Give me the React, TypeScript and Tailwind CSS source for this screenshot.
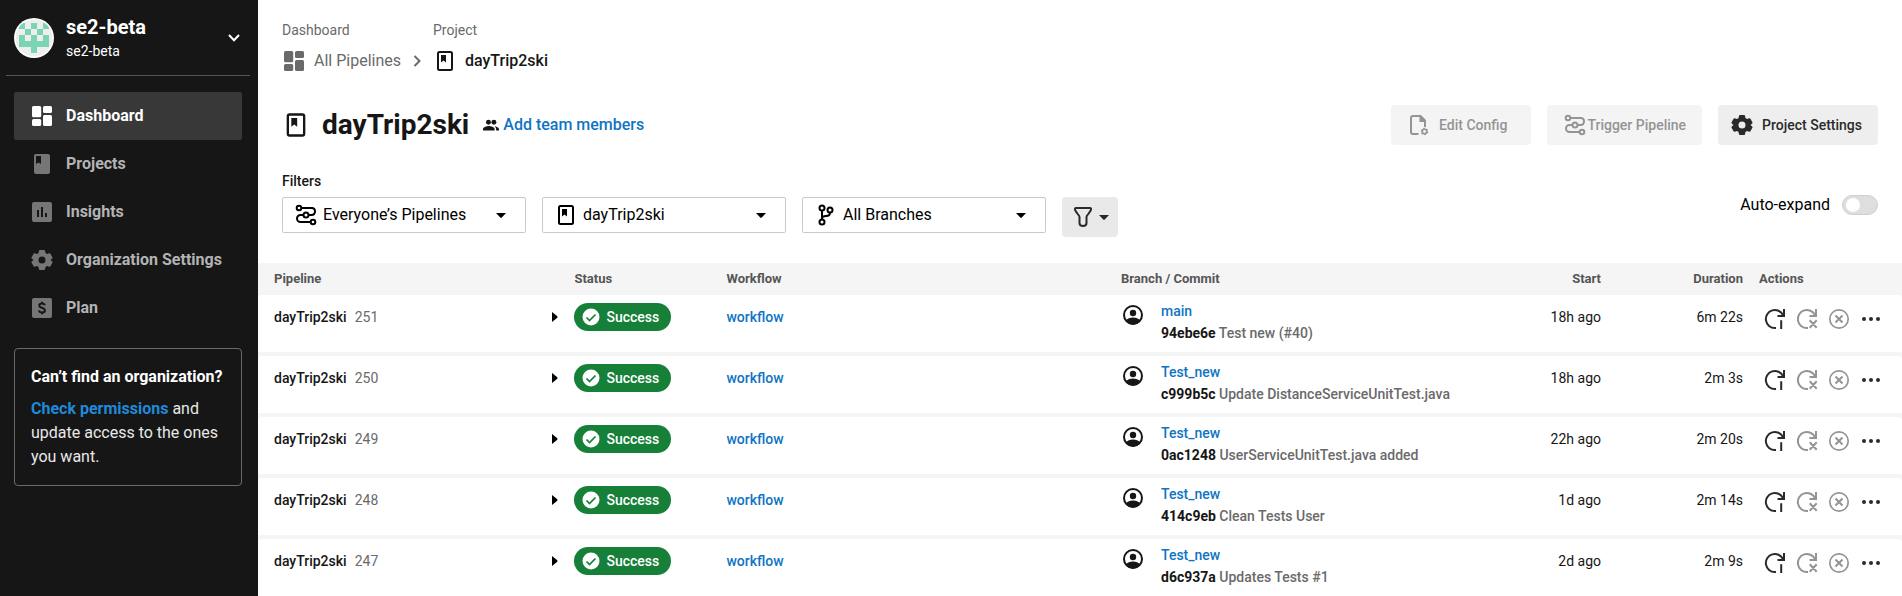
import React, { useState } from "react";

type IconProps = { className?: string };

function Svg({ className = "size-6", children }: { className?: string; children: React.ReactNode }) {
  return (
    <svg viewBox="0 0 24 24" className={`${className} shrink-0`} fill="none" aria-hidden="true">
      {children}
    </svg>
  );
}

function DashboardIcon({ className }: IconProps) {
  return (
    <Svg className={className}>
      <g fill="currentColor">
        <rect x="2" y="2" width="9.2" height="11.2" rx="1.5" />
        <rect x="2" y="15" width="9.2" height="7" rx="1.5" />
        <rect x="13" y="2" width="9" height="7" rx="1.5" />
        <rect x="13" y="11" width="9" height="11" rx="1.5" />
      </g>
    </Svg>
  );
}

function BookSolidIcon({ className }: IconProps) {
  return (
    <Svg className={className}>
      <path
        fill="currentColor"
        fillRule="evenodd"
        d="M6 2h12a2 2 0 0 1 2 2v16a2 2 0 0 1-2 2H6a2 2 0 0 1-2-2V4a2 2 0 0 1 2-2Zm0 2v8l2.5-1.6L11 12V4H6Z"
      />
    </Svg>
  );
}

function BookIcon({ className }: IconProps) {
  return (
    <Svg className={className}>
      <rect x="5" y="3" width="14" height="18" rx="1.5" stroke="currentColor" strokeWidth="2" />
      <path fill="currentColor" d="M8 6h5v7.5l-2.5-2-2.5 2V6Z" />
    </Svg>
  );
}

function InsightsIcon({ className }: IconProps) {
  return (
    <Svg className={className}>
      <path
        fill="currentColor"
        fillRule="evenodd"
        d="M4 2h16a2 2 0 0 1 2 2v16a2 2 0 0 1-2 2H4a2 2 0 0 1-2-2V4a2 2 0 0 1 2-2Zm3 8v7h2v-7H7Zm4-3v10h2V7h-2Zm4 6v4h2v-4h-2Z"
      />
    </Svg>
  );
}

function GearIcon({ className }: IconProps) {
  return (
    <Svg className={className}>
      <path
        fill="currentColor"
        fillRule="evenodd"
        d="M9.900 2h4.200c.5 0 .9.400 1 .9l.3 2.200 1.700 1 2.100-.8c.5-.200 1 0 1.200.4l2 3.500c.3.400.2 1-.2 1.300l-1.700 1.400v.200l1.700 1.400c.4.300.5.900.2 1.300l-2 3.500c-.2.400-.7.600-1.200.400l-2.100-.8-1.700 1-.3 2.200c-.1.500-.5.900-1 .9H9.900c-.5 0-.9-.4-1-.9l-.3-2.200-1.700-1-2.100.8c-.5.200-1 0-1.200-.4l-2-3.500c-.3-.400-.2-1 .2-1.300l1.700-1.400v-.200l-1.700-1.400c-.4-.300-.5-.900-.2-1.300l2-3.500c.2-.400.7-.600 1.200-.4l2.100.8 1.700-1 .3-2.200c.1-.5.5-.9 1-.9ZM12 8.500a3.500 3.500 0 1 0 0 7 3.500 3.500 0 0 0 0-7Z"
      />
    </Svg>
  );
}

function PlanIcon({ className }: IconProps) {
  return (
    <Svg className={className}>
      <rect x="2" y="2" width="20" height="20" rx="2" fill="currentColor" />
      <path
        d="M14.800 9.300c-.2-1.100-1.200-1.800-2.800-1.800s-2.700.8-2.700 2c0 3 5.600 1.600 5.600 4.900 0 1.300-1.200 2.100-2.900 2.100s-2.800-.8-3-2.100M12 5.800v2M12 16.200v2"
        stroke="#161616"
        strokeWidth="2"
      />
    </Svg>
  );
}

function PipelineIcon({ className }: IconProps) {
  return (
    <Svg className={className}>
      <g stroke="currentColor" strokeWidth="2" fill="none">
        <circle cx="5" cy="5" r="2.300" />
        <circle cx="12" cy="12" r="2.500" />
        <circle cx="19" cy="19" r="2.300" />
        <path d="M7.500 5H18a3 3 0 0 1 3 3.300C21 10.500 19.800 12 17.500 12h-3M9.500 12H6.500a3.500 3.500 0 0 0 0 7h10" />
      </g>
    </Svg>
  );
}

function BranchIcon({ className }: IconProps) {
  return (
    <Svg className={className}>
      <g stroke="currentColor" strokeWidth="2">
        <circle cx="8" cy="5" r="2.500" />
        <circle cx="16" cy="7" r="2.500" />
        <circle cx="8" cy="19" r="2.500" />
        <path d="M8 7.500v9M16 9.500c0 3-1.500 3.500-4 3.500-2.500 0-4 .5-4 2.500" />
      </g>
    </Svg>
  );
}

function FileGearIcon({ className }: IconProps) {
  return (
    <Svg className={className}>
      <path d="M11.500 21H6a2 2 0 0 1-2-2V5a2 2 0 0 1 2-2h7.500L18 7.500V14" stroke="currentColor" strokeWidth="2" />
      <path d="M12.500 2.500V9H19L12.500 2.500Z" fill="currentColor" />
      <circle cx="17.500" cy="18.500" r="2.200" stroke="currentColor" strokeWidth="1.500" />
      <circle cx="17.500" cy="18.500" r="3.200" stroke="currentColor" strokeWidth="1.200" strokeDasharray="1.680 1.670" />
    </Svg>
  );
}

function PeopleIcon({ className }: IconProps) {
  return (
    <svg viewBox="1 4 22 15" className={`${className} shrink-0`} fill="currentColor" aria-hidden="true">
      <path d="M16.670 13.130C18.040 14.060 19 15.320 19 17v2h4v-2c0-2.180-3.570-3.470-6.330-3.870z" />
      <circle cx="8.500" cy="7.800" r="3.400" />
      <circle cx="16" cy="7.800" r="3.400" />
      <path d="M9 13c-2.670 0-8 1.340-8 4v2h16v-2c0-2.660-5.330-4-8-4z" />
    </svg>
  );
}

function FunnelIcon({ className }: IconProps) {
  return (
    <Svg className={className}>
      <path
        d="M5 3h14c1 0 1.300 1 1 1.700-.5 1.400-1.500 3-2.800 4.400-1 1-1.700 1.800-1.700 3V18c0 1.800-1.500 3-3.500 3S8.500 19.800 8.500 18v-5.900c0-1.200-.7-2-1.700-3C5.500 7.700 4.500 6.100 4 4.700 3.700 4 4 3 5 3Z"
        stroke="currentColor"
        strokeWidth="2"
      />
    </Svg>
  );
}

function CaretIcon({ className }: IconProps) {
  return (
    <svg viewBox="0 0 10 5" className={`${className} h-[5px] w-2.5 shrink-0`} fill="currentColor" aria-hidden="true">
      <path d="M0 0h10L6 4.300c-.6.700-1.400.700-2 0L0 0Z" />
    </svg>
  );
}

function UserIcon({ className }: IconProps) {
  return (
    <Svg className={className}>
      <circle cx="12" cy="12" r="9" stroke="currentColor" strokeWidth="2" />
      <circle cx="12" cy="10" r="3.200" fill="currentColor" />
      <path d="M4.500 17.500C6.500 15.500 9 14.500 12 14.500s5.500 1 7.500 3A9.200 9.200 0 0 1 12 21.500a9.200 9.200 0 0 1-7.500-4Z" fill="currentColor" />
    </Svg>
  );
}

function RerunIcon({ className }: IconProps) {
  return (
    <Svg className={className}>
      <path d="M13 21h-1a9 9 0 1 1 8-12.800M21 2v7h-6.500M18.200 13.200V22" stroke="currentColor" strokeWidth="2" />
    </Svg>
  );
}

function RerunFailedIcon({ className }: IconProps) {
  return (
    <Svg className={className}>
      <path d="M13 21h-1a9 9 0 1 1 8-12.800M21 2v7h-6.500M14.700 13.200l7 7.600M21.700 13.200l-7 7.600" stroke="currentColor" strokeWidth="2" />
    </Svg>
  );
}

function CancelIcon({ className }: IconProps) {
  return (
    <Svg className={className}>
      <circle cx="12" cy="12" r="9.200" stroke="currentColor" strokeWidth="1.700" />
      <path d="M8.500 8.500l7 7M15.500 8.500l-7 7" stroke="currentColor" strokeWidth="2" />
    </Svg>
  );
}

function MoreIcon({ className }: IconProps) {
  return (
    <Svg className={className}>
      <g fill="currentColor">
        <circle cx="5" cy="12" r="2" />
        <circle cx="12" cy="12" r="2" />
        <circle cx="19" cy="12" r="2" />
      </g>
    </Svg>
  );
}

function OrgAvatar() {
  return (
    <svg viewBox="0 0 40 40" className="size-10 shrink-0" role="img" aria-label="se2-beta">
      <defs>
        <clipPath id="org-avatar">
          <circle cx="20" cy="20" r="18.500" />
        </clipPath>
      </defs>
      <circle cx="20" cy="20" r="20" fill="#fff" />
      <g clipPath="url(#org-avatar)">
        <rect width="40" height="40" fill="#eeeeee" />
        <path
          fill="#7bd5b3"
          d="M5 5h6v6H5zM17 5h6v6h-6zM29 5h6v6h-6zM11 11h6v6h-6zM23 11h6v6h-6zM5 17h6v6H5zM17 17h6v6h-6zM29 17h6v6h-6zM5 23h30v6H5zM17 29h6v6h-6z"
        />
      </g>
    </svg>
  );
}

const navItems = [
  { label: "Dashboard", Icon: DashboardIcon, active: true },
  { label: "Projects", Icon: BookSolidIcon, active: false },
  { label: "Insights", Icon: InsightsIcon, active: false },
  { label: "Organization Settings", Icon: GearIcon, active: false },
  { label: "Plan", Icon: PlanIcon, active: false },
];

function Sidebar() {
  return (
    <aside className="w-[258px] shrink-0 bg-[#161616] text-white">
      <button type="button" className="mx-1.5 flex h-[76px] w-[244px] items-center gap-3 border-b border-[#555] pl-2 text-left">
        <OrgAvatar />
        <span className="flex grow flex-col pt-0.5">
          <span className="text-xl leading-6 font-bold">se2-beta</span>
          <span className="text-sm leading-6">se2-beta</span>
        </span>
        <svg viewBox="0 0 12 8" className="mr-2.5 h-2 w-3" fill="none" aria-hidden="true">
          <path d="M1 1l5 5.200L11 1" stroke="currentColor" strokeWidth="2" />
        </svg>
      </button>
      <nav className="mt-4 mr-4 ml-3.5">
        <ul>
          {navItems.map(({ label, Icon, active }) => (
            <li key={label}>
              <a
                href="#"
                aria-current={active ? "page" : undefined}
                className={
                  active
                    ? "flex h-12 items-center gap-3 rounded-xs bg-[#383838] pl-4 font-bold"
                    : "flex h-12 items-center gap-3 pl-4 font-bold text-[#b3b3b3]"
                }
              >
                <Icon className={active ? "size-6" : "size-6 text-[#767676]"} />
                {label}
              </a>
            </li>
          ))}
        </ul>
      </nav>
      <section className="mt-4 mr-4 ml-3.5 rounded-sm border border-[#6a6a6a] p-4">
        <h2 className="font-bold">Can’t find an organization?</h2>
        <p className="mt-2 text-[#e8e8e8]">
          <a href="#" className="font-bold text-[#1f8ad9]">
            Check permissions
          </a>{" "}
          and update access to the ones you want.
        </p>
      </section>
    </aside>
  );
}

const filters = [
  { id: "owner", label: "Pipelines", value: "Everyone’s Pipelines", Icon: PipelineIcon },
  { id: "project", label: "Project", value: "dayTrip2ski", Icon: BookIcon },
  { id: "branch", label: "Branch", value: "All Branches", Icon: BranchIcon },
];

function Filters() {
  const [expand, setExpand] = useState(false);
  return (
    <div className="flex items-start justify-between pt-7">
      <fieldset>
        <legend className="text-sm leading-4 font-medium text-[#161616]">Filters</legend>
        <div className="mt-2 flex items-start gap-4">
          {filters.map(({ id, label, value, Icon }) => (
            <div key={id} className="relative w-[244px] text-black">
              <select
                id={id}
                aria-label={label}
                className="h-9 w-full appearance-none rounded-xs border border-[#c9c9c9] bg-white pr-8 pl-10"
              >
                <option>{value}</option>
              </select>
              <Icon className="pointer-events-none absolute top-1.5 left-3 size-6" />
              <CaretIcon className="pointer-events-none absolute top-4 right-5" />
            </div>
          ))}
          <button
            type="button"
            aria-label="More filters"
            className="flex h-10 w-14 items-center justify-center gap-1 rounded bg-[#e9e9e9] text-[#2a2a2a]"
          >
            <FunnelIcon className="size-6" />
            <CaretIcon />
          </button>
        </div>
      </fieldset>
      <label className="mt-5 flex items-center gap-3 text-black">
        Auto-expand
        <input
          type="checkbox"
          role="switch"
          checked={expand}
          onChange={(e) => setExpand(e.target.checked)}
          className="flex h-5 w-9 appearance-none items-center rounded-full border border-[#cfcfcf] bg-[#dedede] px-[3px] before:size-3.5 before:rounded-full before:bg-white checked:justify-end checked:bg-[#0071c1]"
        />
      </label>
    </div>
  );
}

const pipelines = [
  { number: 251, branch: "main", sha: "94ebe6e", message: "Test new (#40)", start: "18h ago", duration: "6m 22s" },
  { number: 250, branch: "Test_new", sha: "c999b5c", message: "Update DistanceServiceUnitTest.java", start: "18h ago", duration: "2m 3s" },
  { number: 249, branch: "Test_new", sha: "0ac1248", message: "UserServiceUnitTest.java added", start: "22h ago", duration: "2m 20s" },
  { number: 248, branch: "Test_new", sha: "414c9eb", message: "Clean Tests User", start: "1d ago", duration: "2m 14s" },
  { number: 247, branch: "Test_new", sha: "d6c937a", message: "Updates Tests #1", start: "2d ago", duration: "2m 9s" },
];

function PipelineTable() {
  return (
    <table className="mt-[26px] w-full table-fixed border-separate border-spacing-0 bg-[#f5f5f5] text-sm">
      <colgroup>
        <col className="w-[19.25%]" />
        <col className="w-38" />
        <col className="w-[24%]" />
        <col />
        <col className="w-[140px]" />
        <col className="w-[142px]" />
        <col className="w-[159px]" />
      </colgroup>
      <thead>
        <tr className="h-8 text-left text-[13px] text-[#555]">
          <th className="pl-4">Pipeline</th>
          <th>Status</th>
          <th>Workflow</th>
          <th>Branch / Commit</th>
          <th className="text-right">Start</th>
          <th className="text-right">Duration</th>
          <th className="pl-4">Actions</th>
        </tr>
      </thead>
      <tbody className="[&_td]:border-b-4 [&_td]:border-[#f5f5f5] [&_td]:bg-white [&_td]:pt-2 [&_tr:last-child_td]:border-b-0">
        {pipelines.map((p) => (
          <tr key={p.number} className="h-[61px] align-top last:h-[57px]">
            <td className="rounded-tl pl-4">
              <div className="flex h-7 items-center justify-between pr-4">
                <span className="text-[#6a6a6a]">
                  <span className="mr-2 font-medium text-[#161616]">dayTrip2ski</span>
                  {p.number}
                </span>
                <button type="button" aria-label={`Expand pipeline ${p.number}`}>
                  <svg viewBox="0 0 6 10" className="h-2.5 w-1.5" fill="black" aria-hidden="true">
                    <path d="M0 0l5 4c.7.600.7 1.400 0 2L0 10V0Z" />
                  </svg>
                </button>
              </div>
            </td>
            <td>
              <span className="inline-flex h-7 items-center gap-1.5 rounded-full bg-[#168039] px-2 pr-3 font-medium text-white">
                <svg viewBox="0 0 18 18" className="size-[18px]" fill="none" aria-hidden="true">
                  <circle cx="9" cy="9" r="8.500" fill="white" />
                  <path d="M4.500 9.500l3 3 6-6" stroke="#168039" strokeWidth="1.700" />
                </svg>
                Success
              </span>
            </td>
            <td className="leading-7">
              <a href="#" className="font-medium text-[#0e74c4]">
                workflow
              </a>
            </td>
            <td>
              <div className="flex gap-4">
                <UserIcon className="size-6 text-[#161616]" />
                <div className="flex flex-col gap-1.5 leading-4 font-medium whitespace-nowrap">
                  <a href="#" className="text-[#0e74c4]">
                    {p.branch}
                  </a>
                  <span className="text-[#6a6a6a]">
                    <a href="#" className="font-bold text-[#161616]">
                      {p.sha}
                    </a>{" "}
                    {p.message}
                  </span>
                </div>
              </div>
            </td>
            <td className="text-right leading-7 text-[#161616]">{p.start}</td>
            <td className="text-right leading-7 text-[#161616]">{p.duration}</td>
            <td className="rounded-tr pl-4">
              <div className="flex text-[#2a2a2a]">
                <button type="button" aria-label="Rerun workflow" className="flex size-8 items-center justify-center">
                  <RerunIcon />
                </button>
                <button type="button" disabled aria-label="Rerun from failed" className="flex size-8 items-center justify-center text-[#949494]">
                  <RerunFailedIcon />
                </button>
                <button type="button" disabled aria-label="Cancel workflow" className="flex size-8 items-center justify-center text-[#949494]">
                  <CancelIcon />
                </button>
                <button type="button" aria-label="More actions" className="flex size-8 items-center justify-center">
                  <MoreIcon />
                </button>
              </div>
            </td>
          </tr>
        ))}
      </tbody>
    </table>
  );
}

export default function App() {
  return (
    <div className="flex min-h-screen bg-white font-['Roboto',sans-serif] text-base">
      <Sidebar />
      <main className="min-w-0 grow">
        <header className="pt-5 pr-6 pl-6">
          <nav aria-label="Breadcrumb">
            <ol className="flex gap-1 text-[#6a6a6a]">
              <li>
                <span className="block text-sm leading-5">Dashboard</span>
                <span className="mt-[9px] flex items-center">
                  <a href="#" className="flex items-center gap-2">
                    <DashboardIcon />
                    All Pipelines
                  </a>
                  <svg viewBox="0 0 24 24" className="ml-1 size-6" fill="none" aria-hidden="true">
                    <path d="M9.500 7l5 5-5 5" stroke="currentColor" strokeWidth="2" />
                  </svg>
                </span>
              </li>
              <li>
                <span className="block text-sm leading-5">Project</span>
                <a href="#" className="mt-[9px] flex items-center gap-2 font-medium text-[#161616]">
                  <BookIcon />
                  dayTrip2ski
                </a>
              </li>
            </ol>
          </nav>
          <div className="mt-8 flex h-10 items-center justify-between">
            <div className="flex items-center text-[#161616]">
              <BookIcon className="size-7" />
              <h1 className="ml-3 text-[28px] leading-10 font-bold">dayTrip2ski</h1>
              <a href="#" className="ml-3.5 flex items-center gap-1 font-medium text-[#0e74c4]">
                <PeopleIcon className="h-3 w-4 text-[#161616]" />
                Add team members
              </a>
            </div>
            <div className="flex gap-4 text-sm font-medium">
              <button type="button" disabled className="flex h-10 items-center gap-2 rounded bg-[#f4f4f4] pr-6 pl-4 text-[#949494]">
                <FileGearIcon />
                Edit Config
              </button>
              <button type="button" disabled className="flex h-10 items-center rounded bg-[#f4f4f4] px-4 text-[#949494]">
                <PipelineIcon />
                Trigger Pipeline
              </button>
              <button type="button" className="flex h-10 items-center gap-2 rounded bg-[#eeeeee] pr-4 pl-3 text-[#2a2a2a]">
                <GearIcon />
                Project Settings
              </button>
            </div>
          </div>
          <Filters />
        </header>
        <PipelineTable />
      </main>
    </div>
  );
}
